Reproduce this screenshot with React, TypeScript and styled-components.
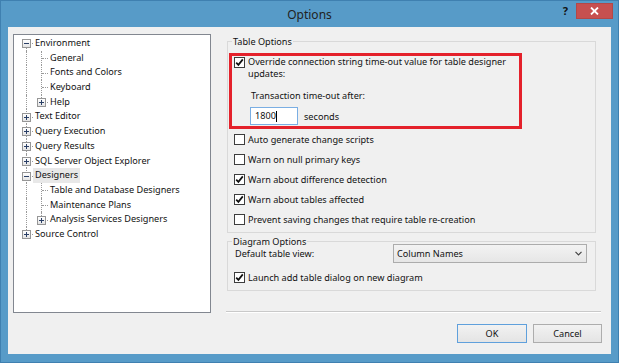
import styled, { createGlobalStyle } from "styled-components";

const GlobalStyle = createGlobalStyle`
  html, body {
    margin: 0;
    padding: 0;
    background: #ffffff;
  }
  * {
    box-sizing: border-box;
  }
`;

const FRAME_BLUE = "#579bc8";
const FACE = "#f0f0f0";
const TEXT = "#111111";

type GuideKind = "pipe" | "blank" | "tee" | "corner" | "first";

interface TreeNode {
    label: string;
    guides: GuideKind[];
    expander?: "plus" | "minus";
    selected?: boolean;
}

const TREE: TreeNode[] = [
    { label: "Environment", guides: ["first"], expander: "minus" },
    { label: "General", guides: ["pipe", "tee"] },
    { label: "Fonts and Colors", guides: ["pipe", "tee"] },
    { label: "Keyboard", guides: ["pipe", "tee"] },
    { label: "Help", guides: ["pipe", "corner"], expander: "plus" },
    { label: "Text Editor", guides: ["tee"], expander: "plus" },
    { label: "Query Execution", guides: ["tee"], expander: "plus" },
    { label: "Query Results", guides: ["tee"], expander: "plus" },
    { label: "SQL Server Object Explorer", guides: ["tee"], expander: "plus" },
    { label: "Designers", guides: ["tee"], expander: "minus", selected: true },
    { label: "Table and Database Designers", guides: ["pipe", "tee"] },
    { label: "Maintenance Plans", guides: ["pipe", "tee"] },
    { label: "Analysis Services Designers", guides: ["pipe", "corner"], expander: "plus" },
    { label: "Source Control", guides: ["corner"], expander: "plus" },
];

const Window = styled.div`
    width: 619px;
    height: 363px;
    background: ${FRAME_BLUE};
    border: 1px solid #3f80b0;
    display: flex;
    flex-direction: column;
    font-family: "Noto Sans", "Liberation Sans", sans-serif;
    font-size: 9.15px;
    color: ${TEXT};
`;

const TitleBar = styled.div`
    height: 26px;
    flex-shrink: 0;
    display: grid;
    grid-template-columns: 1fr auto 1fr;
    align-items: start;
`;

const Title = styled.div`
    grid-column: 2;
    font-size: 12px;
    line-height: 27px;
    color: #222;
`;

const Controls = styled.div`
    grid-column: 3;
    justify-self: end;
    display: flex;
    align-items: center;
    gap: 8px;
    margin-top: 2px;
    margin-right: 5px;
`;

const HelpMark = styled.span`
    font-size: 11px;
    font-weight: 700;
    line-height: 16px;
    color: #111;
`;

const CloseButton = styled.button`
    width: 37px;
    height: 16px;
    padding: 0;
    border: 1px solid #b34848;
    background: #c75050;
    display: flex;
    align-items: center;
    justify-content: center;
`;

const Content = styled.div`
    margin: 0 7px;
    height: 327px;
    background: ${FACE};
    display: flex;
    padding: 7px 0 0 5px;
`;

const Tree = styled.div`
    width: 198px;
    height: 279px;
    background: #ffffff;
    border: 1px solid #828790;
    padding-top: 1px;
    flex-shrink: 0;
`;

const TreeRow = styled.div`
    display: flex;
    height: 14.7px;
    padding-left: 5px;
    white-space: nowrap;
`;

const Guide = styled.span<{ $kind: GuideKind }>`
    position: relative;
    width: 15px;
    flex-shrink: 0;

    &::before {
        content: "";
        display: ${(p) => (p.$kind === "blank" ? "none" : "block")};
        position: absolute;
        left: 7px;
        top: ${(p) => (p.$kind === "first" ? "50%" : "0")};
        bottom: ${(p) => (p.$kind === "corner" ? "50%" : "0")};
        border-left: 1px dotted #9a9a9a;
    }

    &::after {
        content: "";
        display: ${(p) =>
            p.$kind === "pipe" || p.$kind === "blank" ? "none" : "block"};
        position: absolute;
        left: 8px;
        width: 6px;
        top: 50%;
        border-top: 1px dotted #9a9a9a;
    }
`;

const Expander = styled.span`
    position: absolute;
    z-index: 1;
    left: 3px;
    top: 50%;
    width: 9px;
    height: 9px;
    margin-top: -4px;
    border: 1px solid #969696;
    background: linear-gradient(#ffffff, #e3e3e3);
`;

const SignBar = styled.span<{ $vertical?: boolean }>`
    position: absolute;
    background: #2a3f66;
    left: ${(p) => (p.$vertical ? "3px" : "1px")};
    top: ${(p) => (p.$vertical ? "1px" : "3px")};
    width: ${(p) => (p.$vertical ? "1px" : "5px")};
    height: ${(p) => (p.$vertical ? "5px" : "1px")};
`;

const TreeLabel = styled.span<{ $selected?: boolean }>`
    margin-left: -1px;
    padding: 0 2px;
    line-height: 14.7px;
    background: ${(p) => (p.$selected ? "#e8e8e8" : "transparent")};
`;

const RightColumn = styled.div`
    margin-left: 15px;
    width: 376px;
    display: flex;
    flex-direction: column;
`;

const GroupBox = styled.div<{ $gap: number }>`
    position: relative;
    width: 369px;
    margin: ${(p) => p.$gap}px 0 0 1px;
    border: 1px solid #d9d9d9;
`;

const Caption = styled.span`
    position: absolute;
    top: -7px;
    left: 4px;
    padding: 0 1px;
    line-height: 14px;
    background: ${FACE};
`;

const TableBody = styled.div`
    padding: 11px 0 3px 0;
`;

const Highlight = styled.div`
    width: 293px;
    height: 76px;
    margin-left: 1px;
    border: 3px solid #e4212b;
    padding-left: 2px;
`;

const OverrideRow = styled.div`
    display: flex;
    align-items: flex-start;
    gap: 3px;
`;

const OverrideText = styled.span`
    max-width: 270px;
    line-height: 12px;
`;

const FieldLabel = styled.div`
    margin-top: 10px;
    padding-left: 17px;
    line-height: 12px;
`;

const InputRow = styled.div`
    margin-top: 5px;
    padding-left: 16px;
    display: flex;
    align-items: center;
    gap: 6px;
`;

const TextInput = styled.div`
    width: 48px;
    height: 18px;
    border: 1px solid #7aaee3;
    background: #ffffff;
    padding-left: 4px;
    line-height: 16px;
    display: flex;
    align-items: center;
`;

const Caret = styled.span`
    width: 1px;
    height: 11px;
    background: #000;
`;

const OptionRow = styled.div<{ $indent?: number }>`
    height: 20px;
    display: flex;
    align-items: center;
    gap: 3px;
    padding-left: ${(p) => p.$indent ?? 6}px;
`;

const Box = styled.span<{ $top?: number }>`
    width: 11px;
    height: 11px;
    flex-shrink: 0;
    margin-top: ${(p) => p.$top ?? 0}px;
    border: 1px solid #3d3d3d;
    background: #ffffff;
    display: flex;
    align-items: center;
    justify-content: center;
`;

const DiagramBody = styled.div`
    height: 48px;
    padding: 2px 8px 0 6px;
`;

const ViewRow = styled.div`
    display: flex;
    align-items: center;
    justify-content: space-between;
    height: 19px;
    padding-left: 1px;
`;

const Select = styled.div`
    width: 194px;
    height: 19px;
    border: 1px solid #acacac;
    background: linear-gradient(#f3f3f3, #e6e6e6);
    padding: 0 4px 0 3px;
    display: flex;
    align-items: center;
    justify-content: space-between;
`;

const Separator = styled.div`
    margin-top: 20px;
    width: 375px;
    border-top: 1px solid #c9c9c9;
    border-bottom: 1px solid #ffffff;
`;

const ButtonRow = styled.div`
    margin-top: 11px;
    display: flex;
    justify-content: flex-end;
    gap: 6px;
`;

const DialogButton = styled.button<{ $default?: boolean; $width: number }>`
    width: ${(p) => p.$width}px;
    height: 19px;
    padding: 0;
    font-family: inherit;
    font-size: 9.15px;
    color: ${TEXT};
    border: 1px solid ${(p) => (p.$default ? "#5fa0dc" : "#adadad")};
    background: linear-gradient(#f2f2f2, #e4e4e4);
`;

function Check({ checked, top }: { checked?: boolean; top?: number }) {
    return (
        <Box $top={top}>
            {checked && (
                <svg width="9" height="9" viewBox="0 0 9 9">
                    <path
                        d="M1.2 4.6 L3.4 6.9 L7.8 1.4"
                        fill="none"
                        stroke="#111"
                        strokeWidth="1.7"
                    />
                </svg>
            )}
        </Box>
    );
}

function TreeItem({ node }: { node: TreeNode }) {
    const last = node.guides.length - 1;
    return (
        <TreeRow>
            {node.guides.map((kind, i) => (
                <Guide key={i} $kind={kind}>
                    {i === last && node.expander && (
                        <Expander>
                            <SignBar />
                            {node.expander === "plus" && <SignBar $vertical />}
                        </Expander>
                    )}
                </Guide>
            ))}
            <TreeLabel $selected={node.selected}>{node.label}</TreeLabel>
        </TreeRow>
    );
}

const OPTIONS = [
    { label: "Auto generate change scripts", checked: false },
    { label: "Warn on null primary keys", checked: false },
    { label: "Warn about difference detection", checked: true },
    { label: "Warn about tables affected", checked: true },
    { label: "Prevent saving changes that require table re-creation", checked: false },
];

export default function App() {
    return (
        <>
            <GlobalStyle />
            <Window>
                <TitleBar>
                    <Title>Options</Title>
                    <Controls>
                        <HelpMark>?</HelpMark>
                        <CloseButton aria-label="Close">
                            <svg width="9" height="8" viewBox="0 0 9 8">
                                <path
                                    d="M1 0.5 L8 7.5 M8 0.5 L1 7.5"
                                    stroke="#ffffff"
                                    strokeWidth="1.8"
                                />
                            </svg>
                        </CloseButton>
                    </Controls>
                </TitleBar>

                <Content>
                    <Tree>
                        {TREE.map((node) => (
                            <TreeItem key={node.label} node={node} />
                        ))}
                    </Tree>

                    <RightColumn>
                        <GroupBox $gap={7}>
                            <Caption>Table Options</Caption>
                            <TableBody>
                                <Highlight>
                                    <OverrideRow>
                                        <Check checked top={1} />
                                        <OverrideText>
                                            Override connection string time-out
                                            value for table designer updates:
                                        </OverrideText>
                                    </OverrideRow>
                                    <FieldLabel>Transaction time-out after:</FieldLabel>
                                    <InputRow>
                                        <TextInput>
                                            1800
                                            <Caret />
                                        </TextInput>
                                        <span>seconds</span>
                                    </InputRow>
                                </Highlight>
                                {OPTIONS.map((o) => (
                                    <OptionRow key={o.label}>
                                        <Check checked={o.checked} />
                                        <span>{o.label}</span>
                                    </OptionRow>
                                ))}
                            </TableBody>
                        </GroupBox>

                        <GroupBox $gap={8}>
                            <Caption>Diagram Options</Caption>
                            <DiagramBody>
                                <ViewRow>
                                    <span>Default table view:</span>
                                    <Select>
                                        <span>Column Names</span>
                                        <svg width="7" height="5" viewBox="0 0 7 5">
                                            <path
                                                d="M0.5 0.8 L3.5 3.8 L6.5 0.8"
                                                fill="none"
                                                stroke="#444"
                                                strokeWidth="1.2"
                                            />
                                        </svg>
                                    </Select>
                                </ViewRow>
                                <OptionRow $indent={0} style={{ marginTop: 4 }}>
                                    <Check checked />
                                    <span>Launch add table dialog on new diagram</span>
                                </OptionRow>
                            </DiagramBody>
                        </GroupBox>

                        <Separator />
                        <ButtonRow>
                            <DialogButton $default $width={70}>
                                OK
                            </DialogButton>
                            <DialogButton $width={69}>Cancel</DialogButton>
                        </ButtonRow>
                    </RightColumn>
                </Content>
            </Window>
        </>
    );
}
